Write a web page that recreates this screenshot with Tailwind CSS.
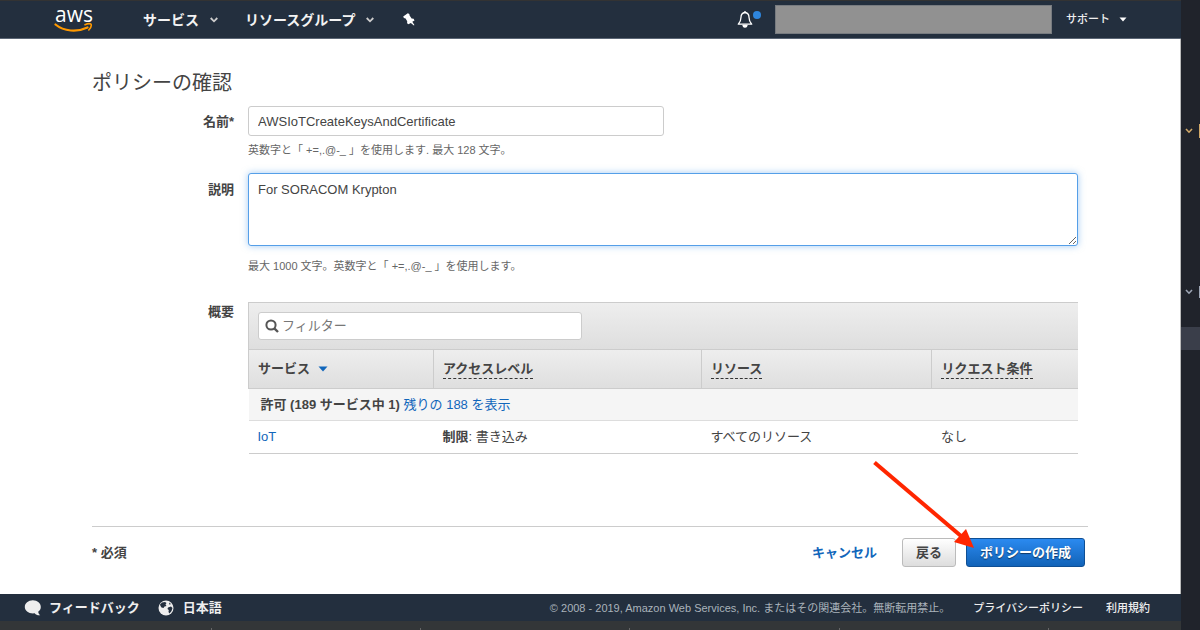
<!DOCTYPE html>
<html lang="ja">
<head>
<meta charset="utf-8">
<meta name="viewport" content="width=device-width, initial-scale=1">
<title>ポリシーの確認</title>
<script src="https://cdn.jsdelivr.net/npm/@tailwindcss/browser@4"></script>
</head>
<body class="flex min-h-screen bg-[#20232b] font-['Liberation_Sans','Noto_Sans_CJK_JP',sans-serif] text-[13px] leading-5 text-[#444]">

<div class="flex min-w-0 flex-1 flex-col bg-white">
  <header class="flex h-[39px] flex-none items-center border-t border-b border-t-[#333] border-b-[#5b6675] bg-[#232f3e] text-sm font-bold text-white">
    <a href="#" aria-label="aws" class="relative ml-[54px] block h-[37px] w-[40px]">
      <span class="block pt-px text-center font-['Open_Sans','Noto_Sans',sans-serif] text-[21px] leading-6 font-medium">aws</span>
      <svg class="absolute top-[21px] left-0" width="40" height="12" viewBox="0 0 40 12" fill="none" aria-hidden="true">
        <path d="M1.500 2.500C10 9.500 23 10.500 33.500 5.500" stroke="#f90" stroke-width="2.200" stroke-linecap="round"/>
        <path d="M31 2.700C33.500 1.600 36 1.500 37 2.200C37.600 3.500 36.500 6.200 34.800 8" stroke="#f90" stroke-width="1.600" stroke-linecap="round" stroke-linejoin="round"/>
      </svg>
    </a>
    <nav class="flex items-center text-[#f3f3f3]">
      <button class="ml-[49px] flex items-center gap-[11px]">サービス
        <svg width="8" height="6" viewBox="0 0 8 6" fill="none" stroke="#ccc" stroke-width="1.800" aria-hidden="true"><path d="M.7 1L4 4.300L7.300 1"/></svg>
      </button>
      <button class="ml-[27px] flex items-center gap-[11px]">リソースグループ
        <svg width="8" height="6" viewBox="0 0 8 6" fill="none" stroke="#ccc" stroke-width="1.800" aria-hidden="true"><path d="M.7 1L4 4.300L7.300 1"/></svg>
      </button>
      <button class="ml-[29px]" aria-label="ピン留め">
        <svg width="13" height="13" viewBox="0 0 13 13" fill="#fff" aria-hidden="true"><path d="M4.800.2L6.300 1L6.600 2.500L8.600 5.400L10.600 5.800L11.500 7.400L9.300 8.800L11.400 12L10.900 12.500L7.800 9.900L5.400 11.200L4.100 10.300L4.200 8.200L2.600 5.600L.9 4.900L.2 3.500Z"/></svg>
      </button>
    </nav>
    <div class="ml-auto flex items-center font-medium">
      <button class="relative mr-[22px] block" aria-label="通知">
        <svg width="16" height="17" viewBox="0 0 16 17" fill="none" stroke="#fff" stroke-width="1.300" stroke-linejoin="round" aria-hidden="true"><path d="M8 1.500C5.400 1.800 4 3.700 4 6.300C4 9.500 3.300 11 1.300 13.200H14.700C12.700 11 12 9.500 12 6.300C12 3.700 10.600 1.800 8 1.500Z"/><path d="M8 0V2"/><path d="M6 14.500C6.400 16.700 9.600 16.700 10 14.500Z" fill="#fff"/></svg>
        <span class="absolute top-0 left-4 size-2 rounded-full bg-[#2e86de]"></span>
      </button>
      <span class="h-[29px] w-[277px] border border-[#777b80] bg-[#919191]"></span>
      <button class="mr-[54px] ml-[14px] flex items-center gap-[9px] text-[11px] font-medium text-[#eee]">サポート
        <svg width="8" height="5" viewBox="0 0 8 5" fill="#fff" aria-hidden="true"><path d="M.5.500H7.500L4 4.500Z"/></svg>
      </button>
    </div>
  </header>

  <main class="flex-1 border-r border-[#bbb] pr-[92px] pl-[92px]">
    <h1 class="pt-[30px] text-xl leading-[29px] text-[#444]">ポリシーの確認</h1>

    <form class="grid grid-cols-[142px_minmax(0,1fr)] gap-x-[14px] pr-[10px]">
      <label for="name" class="pt-[14px] text-right font-bold">名前*</label>
      <div class="pt-2">
        <input id="name" type="text" value="AWSIoTCreateKeysAndCertificate" class="block h-[30px] w-full max-w-[416px] rounded-[3px] border border-[#ccc] bg-white px-[9px] text-[13px] text-[#444]">
        <p class="pt-1 text-[11px] text-[#666]">英数字と「 +=,.@-_ 」を使用します. 最大 128 文字。</p>
      </div>

      <label for="desc" class="pt-5 text-right font-bold">説明</label>
      <div class="pt-[13px]">
        <textarea id="desc" class="block h-[73px] w-full resize rounded-[3px] border border-[#559fe8] bg-white px-[9px] py-[6px] text-[13px] leading-5 text-[#444] shadow-[0_0_7px_rgba(85,159,232,0.55)] outline-none">For SORACOM Krypton</textarea>
        <p class="pt-[10px] text-[11px] text-[#666]">最大 1000 文字。英数字と「 +=,.@-_ 」を使用します。</p>
      </div>

      <span class="pt-[26px] text-right font-bold">概要</span>
      <div class="pt-[26px]">
        <div class="border-t border-l border-[#ccc] bg-linear-to-b from-[#eee] to-[#dedede] px-[9px] pt-[9px] pb-[9px]">
          <div class="flex h-7 w-full max-w-[324px] items-center rounded-[3px] border border-[#ccc] bg-white pl-[6px]">
            <svg width="14" height="14" viewBox="0 0 14 14" fill="none" stroke="#555" aria-hidden="true"><circle cx="6" cy="6" r="4.600" stroke-width="2"/><path d="M9.300 9.300L13 13" stroke-width="2.400"/></svg>
            <input type="search" aria-label="フィルター" placeholder="フィルター" class="ml-[3px] min-w-0 flex-1 bg-transparent text-[13px] outline-none placeholder:text-[#777]">
          </div>
        </div>
        <table class="w-full table-fixed border-collapse text-left">
          <colgroup><col class="w-[22.3%]"><col class="w-[32.3%]"><col class="w-[27.8%]"><col></colgroup>
          <thead>
            <tr class="h-[39px] bg-linear-to-b from-[#eee] to-[#dedede]">
              <th class="border border-[#ccc] px-[9px] font-bold"><button class="flex items-center gap-2 font-bold">サービス <svg width="10" height="6" viewBox="0 0 10 6" fill="#1166bb" aria-hidden="true"><path d="M.5.500H9.500L5 5.500Z"/></svg></button></th>
              <th class="border border-[#ccc] px-[9px] font-bold"><span class="inline-block border-b border-dashed border-[#333] leading-[18px]">アクセスレベル</span></th>
              <th class="border border-[#ccc] px-[9px] font-bold"><span class="inline-block border-b border-dashed border-[#333] leading-[18px]">リソース</span></th>
              <th class="border-y border-l border-[#ccc] px-[9px] font-bold"><span class="inline-block border-b border-dashed border-[#333] leading-[18px]">リクエスト条件</span></th>
            </tr>
          </thead>
          <tbody>
            <tr class="h-8 border-b border-[#ddd] bg-[#f5f5f5]">
              <td colspan="4" class="px-3"><b>許可 (189 サービス中 1)</b> <a href="#" class="text-[#1166bb]">残りの 188 を表示</a></td>
            </tr>
            <tr class="h-[33px] border-b border-[#ccc]">
              <td class="px-[9px]"><a href="#" class="text-[#1166bb]">IoT</a></td>
              <td class="px-[9px]"><b>制限</b>: 書き込み</td>
              <td class="px-[9px]">すべてのリソース</td>
              <td class="px-[9px]">なし</td>
            </tr>
          </tbody>
        </table>
      </div>
    </form>

    <div class="mt-[72px] flex items-center border-t border-[#ccc] pt-[11px] pr-[3px] font-bold">
      <span>* 必須</span>
      <a href="#" class="mr-[25px] ml-auto text-[#1166bb]">キャンセル</a>
      <button class="mr-[10px] h-[29px] rounded-[3px] border border-[#bbb] bg-linear-to-b from-white to-[#ddd] px-[13px] font-bold">戻る</button>
      <div class="relative">
        <button class="block h-[29px] rounded-[3px] border border-[#0f4f94] bg-linear-to-b from-[#2b8af0] to-[#1163b8] px-[13px] font-bold text-white text-shadow-[0_1px_1px_rgba(0,0,0,0.5)]">ポリシーの作成</button>
        <svg class="pointer-events-none absolute -top-[78px] -left-[94px]" width="106" height="92" viewBox="0 0 106 92" aria-hidden="true"><path d="M2.500 2.500L89 76" stroke="#ff2600" stroke-width="4"/><path d="M102 88L82 82L94 69Z" fill="#ff2600"/></svg>
      </div>
    </div>
  </main>

  <footer class="flex h-[27px] flex-none items-center bg-[#232f3e] pl-6 text-[11px] font-medium text-[#eee]">
    <a href="#" class="flex items-center gap-[7px] text-[13px] font-bold">
      <svg width="18" height="16" viewBox="0 0 18 16" fill="#eee" aria-hidden="true"><path d="M8.800.300C13.500.300 16.800 3.300 16.800 7C16.800 9 15.800 10.700 14.200 11.800C14.400 13.300 15 14.400 16.200 15.300C14 15.600 12 15 10.700 13.300C5 14 .8 11 .8 7C.8 3.300 4.300.300 8.800.300Z"/></svg>フィードバック</a>
    <button class="ml-[18px] flex items-center gap-[9px] text-[13px] font-bold">
      <svg width="16" height="16" viewBox="0 0 16 16" aria-hidden="true"><circle cx="8" cy="8" r="7.500" fill="#eee"/><path d="M2 4.500L4 2.500L7 2L8.500 3L7.500 4.500L8.500 6L6.500 6.500L5.500 8L3.500 7.500L2.500 6ZM10 7.500L13 6.500L14.500 8L13.500 11L11.500 13.500L10.500 12L10.800 10L9.500 9ZM11 2.500L13 4L11.500 4.800Z" fill="#232f3e"/></svg>日本語</button>
    <span class="mr-[23px] ml-auto font-normal text-[#aab3bb]">© 2008 - 2019, Amazon Web Services, Inc. またはその関連会社。無断転用禁止。</span>
    <a href="#" class="mr-[23px]">プライバシーポリシー</a>
    <a href="#" class="mr-[31px]">利用規約</a>
  </footer>
  <div class="flex h-[9px] flex-none items-end overflow-hidden bg-[#333638] pl-[2px]" aria-hidden="true">
    <span class="h-[2px] w-[210px] border-r border-[#666]"></span>
    <span class="h-[2px] w-[209px] border-r border-[#666]"></span>
    <span class="h-[2px] w-[209px] border-r border-[#666]"></span>
    <span class="h-[2px] w-[210px] border-r border-[#666]"></span>
    <span class="h-[2px] w-[209px] border-r border-[#666]"></span>
  </div>
</div>

<aside class="w-[19px] flex-none" aria-hidden="true">
  <div class="mt-[124px] flex h-[14px] items-center justify-between pl-1">
    <svg width="8" height="6" viewBox="0 0 8 6" fill="none" stroke="#d0a868" stroke-width="1.600"><path d="M1 1L4 4.200L7 1"/></svg>
    <span class="h-[14px] w-px bg-[#d0a868]"></span>
  </div>
  <div class="mt-[148px] flex h-3 items-center justify-between pl-1">
    <svg width="8" height="6" viewBox="0 0 8 6" fill="none" stroke="#9da5b4" stroke-width="1.600"><path d="M1 1L4 4.200L7 1"/></svg>
    <span class="h-3 w-px bg-[#9da5b4]"></span>
  </div>
  <div class="mt-[29px] h-[23px] bg-[#3a3e4a]"></div>
</aside>
</body>
</html>
